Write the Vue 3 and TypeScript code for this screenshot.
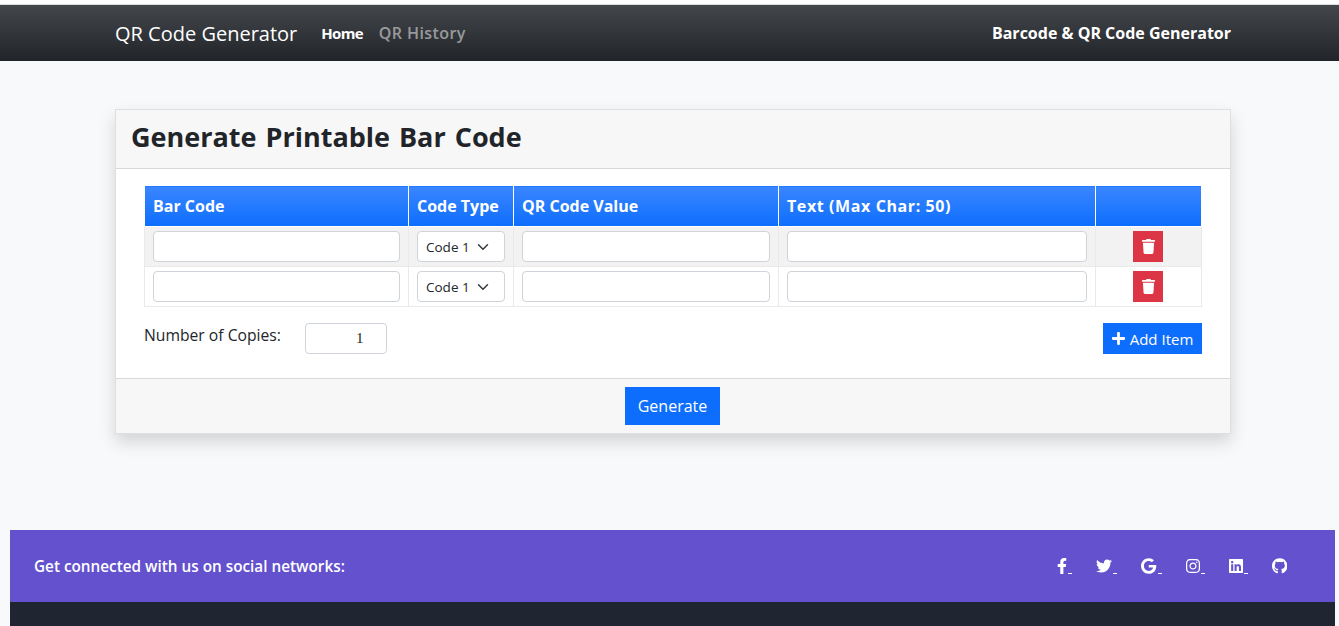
<script setup lang="ts">
import { ref } from 'vue'

interface Social {
  name: string
  viewBox: string
  d: string
}

const rows = ref([{ id: 1 }, { id: 2 }])
const copies = ref(1)

const socials: Social[] = [
  {
    name: 'facebook',
    viewBox: '0 0 320 512',
    d: 'M279.14 288l14.22-92.66h-88.91v-60.13c0-25.35 12.42-50.06 52.24-50.06h40.42V6.26S260.43 0 225.36 0c-73.22 0-121.08 44.38-121.08 124.72v70.62H22.89V288h81.39v224h100.17V288z',
  },
  {
    name: 'twitter',
    viewBox: '0 0 512 512',
    d: 'M459.37 151.716c.325 4.548.325 9.097.325 13.645 0 138.72-105.583 298.558-298.558 298.558-59.452 0-114.68-17.219-161.137-47.106 8.447.974 16.568 1.299 25.34 1.299 49.055 0 94.213-16.568 130.274-44.832-46.132-.975-84.792-31.188-98.112-72.772 6.498.974 12.995 1.624 19.818 1.624 9.421 0 18.843-1.3 27.614-3.573-48.081-9.747-84.143-51.98-84.143-102.985v-1.299c13.969 7.797 30.214 12.67 47.431 13.319-28.264-18.843-46.781-51.005-46.781-87.391 0-19.492 5.197-37.36 14.294-52.954 51.655 63.675 129.3 105.258 216.365 109.807-1.624-7.797-2.599-15.918-2.599-24.04 0-57.828 46.782-104.934 104.934-104.934 30.213 0 57.502 12.67 76.67 33.137 23.715-4.548 46.456-13.32 66.599-25.34-7.798 24.366-24.366 44.833-46.132 57.827 21.117-2.273 41.584-8.122 60.426-16.243-14.292 20.791-32.161 39.308-52.628 54.253z',
  },
  {
    name: 'google',
    viewBox: '0 0 488 512',
    d: 'M488 261.8C488 403.3 391.1 504 248 504 110.8 504 0 393.2 0 256S110.8 8 248 8c66.8 0 123 24.5 166.3 64.9l-67.5 64.9C258.5 52.6 94.3 116.6 94.3 256c0 86.5 69.1 156.6 153.7 156.6 98.2 0 135-70.4 140.8-106.9H248v-85.3h236.1c2.3 12.7 3.9 24.9 3.9 41.4z',
  },
  {
    name: 'instagram',
    viewBox: '0 0 448 512',
    d: 'M224.1 141c-63.6 0-114.9 51.3-114.9 114.9s51.3 114.9 114.9 114.9S339 319.5 339 255.9 287.7 141 224.1 141zm0 189.6c-41.1 0-74.7-33.5-74.7-74.7s33.5-74.7 74.7-74.7 74.7 33.5 74.7 74.7-33.6 74.7-74.7 74.7zm146.4-194.3c0 14.9-12 26.8-26.8 26.8-14.9 0-26.8-12-26.8-26.8s12-26.8 26.8-26.8 26.8 12 26.8 26.8zm76.1 27.2c-1.7-35.9-9.9-67.7-36.2-93.9-26.2-26.2-58-34.4-93.9-36.2-37-2.1-147.9-2.1-184.9 0-35.8 1.7-67.6 9.9-93.9 36.1s-34.4 58-36.2 93.9c-2.1 37-2.1 147.9 0 184.9 1.7 35.9 9.9 67.7 36.2 93.9s58 34.4 93.9 36.2c37 2.1 147.9 2.1 184.9 0 35.9-1.7 67.7-9.9 93.9-36.2 26.2-26.2 34.4-58 36.2-93.9 2.1-37 2.1-147.8 0-184.8zM398.8 388c-7.8 19.6-22.9 34.7-42.6 42.6-29.5 11.7-99.5 9-132.1 9s-102.7 2.6-132.1-9c-19.6-7.8-34.7-22.9-42.6-42.6-11.7-29.5-9-99.5-9-132.1s-2.6-102.7 9-132.1c7.8-19.6 22.9-34.7 42.6-42.6 29.5-11.7 99.5-9 132.1-9s102.7-2.6 132.1 9c19.6 7.8 34.7 22.9 42.6 42.6 11.7 29.5 9 99.5 9 132.1s2.7 102.7-9 132.1z',
  },
  {
    name: 'linkedin',
    viewBox: '0 0 448 512',
    d: 'M416 32H31.9C14.3 32 0 46.5 0 64.3v383.4C0 465.5 14.3 480 31.9 480H416c17.6 0 32-14.5 32-32.3V64.3c0-17.8-14.4-32.3-32-32.3zM135.4 416H69V202.2h66.5V416zm-33.2-243c-21.3 0-38.5-17.3-38.5-38.5S80.9 96 102.2 96c21.2 0 38.5 17.3 38.5 38.5 0 21.3-17.2 38.5-38.5 38.5zm282.1 243h-66.4V312c0-24.8-.5-56.7-34.5-56.7-34.6 0-39.9 27-39.9 54.9V416h-66.4V202.2h63.7v29.2h.9c8.9-16.8 30.6-34.5 62.9-34.5 67.2 0 79.7 44.3 79.7 101.9V416z',
  },
  {
    name: 'github',
    viewBox: '0 0 496 512',
    d: 'M165.9 397.4c0 2-2.3 3.6-5.2 3.6-3.3 0-5.6-1.6-5.6-3.6 0-2 2.3-3.6 5.2-3.6 3-.3 5.6 1.3 5.6 3.6zm-31.1-4.5c-.7 2 1.3 4.3 4.3 4.9 2.6 1 5.6 0 6.2-2s-1.3-4.3-4.3-5.2c-2.6-.7-5.5.3-6.2 2.3zm44.2-1.7c-2.9.7-4.9 2.6-4.6 4.9.3 2 2.9 3.3 5.9 2.6 2.9-.7 4.9-2.6 4.6-4.6-.3-1.9-3-3.2-5.9-2.9zM244.8 8C106.1 8 0 113.3 0 252c0 110.9 69.8 205.8 169.5 239.2 12.8 2.3 17.3-5.6 17.3-12.1 0-6.2-.3-40.4-.3-61.4 0 0-70 15-84.7-29.8 0 0-11.4-29.1-27.8-36.6 0 0-22.9-15.7 1.6-15.4 0 0 24.9 2 38.6 25.8 21.9 38.6 58.6 27.5 72.9 20.9 2.3-16 8.8-27.1 16-33.7-55.9-6.2-112.3-14.3-112.3-110.5 0-27.5 7.6-41.3 23.6-58.9-2.6-6.5-11.1-33.3 2.6-67.9 20.9-6.5 69 27 69 27 20-5.6 41.5-8.5 62.8-8.5s42.8 2.9 62.8 8.5c0 0 48.1-33.6 69-27 13.7 34.7 5.2 61.4 2.6 67.9 16 17.7 25.8 31.5 25.8 58.9 0 96.5-58.9 104.2-114.8 110.5 9.2 7.9 17 22.9 17 46.4 0 33.7-.3 75.4-.3 83.6 0 6.5 4.6 14.4 17.3 12.1C428.2 457.8 496 362.9 496 252 496 113.3 383.5 8 244.8 8z',
  },
]
</script>

<template>
  <div class="page">
    <nav class="navbar">
      <a class="brand">QR Code Generator</a>
      <a class="nav-link active">Home</a>
      <a class="nav-link history">QR History</a>
      <span class="nav-title">Barcode &amp; QR Code Generator</span>
    </nav>

    <main class="card">
      <header class="card-header">
        <h2>Generate Printable Bar Code</h2>
      </header>

      <section class="card-body">
        <table class="items">
          <colgroup>
            <col style="width: 264px" />
            <col style="width: 105px" />
            <col style="width: 265px" />
            <col style="width: 317px" />
            <col style="width: 106px" />
          </colgroup>
          <thead>
            <tr>
              <th>Bar Code</th>
              <th>Code Type</th>
              <th>QR Code Value</th>
              <th class="wide">Text (Max Char: 50)</th>
              <th></th>
            </tr>
          </thead>
          <tbody>
            <tr v-for="row in rows" :key="row.id">
              <td><input class="field" type="text" /></td>
              <td>
                <select class="field select">
                  <option>Code 128</option>
                  <option>QR Code</option>
                </select>
              </td>
              <td><input class="field" type="text" /></td>
              <td><input class="field" type="text" /></td>
              <td class="action">
                <button class="btn-delete" type="button" aria-label="Delete">
                  <svg viewBox="0 0 448 512" width="13" height="15">
                    <path fill="#fff" d="M432 32H312l-9.4-18.7A24 24 0 0 0 281.1 0H166.8a23.72 23.72 0 0 0-21.4 13.3L136 32H16A16 16 0 0 0 0 48v32a16 16 0 0 0 16 16h416a16 16 0 0 0 16-16V48a16 16 0 0 0-16-16zM53.2 467a48 48 0 0 0 47.9 45h245.8a48 48 0 0 0 47.9-45L416 128H32z" />
                  </svg>
                </button>
              </td>
            </tr>
          </tbody>
        </table>

        <div class="copies-row">
          <label class="copies-label">Number of Copies:</label>
          <input v-model="copies" class="field copies" type="number" />
          <button class="btn-add" type="button">
            <svg viewBox="0 0 448 512" width="13" height="15">
              <path fill="#fff" d="M416 208H272V64c0-17.67-14.33-32-32-32h-32c-17.67 0-32 14.33-32 32v144H32c-17.67 0-32 14.33-32 32v32c0 17.67 14.33 32 32 32h144v144c0 17.67 14.33 32 32 32h32c17.67 0 32-14.33 32-32V304h144c17.67 0 32-14.33 32-32v-32c0-17.67-14.33-32-32-32z" />
            </svg>
            Add Item
          </button>
        </div>
      </section>

      <footer class="card-footer">
        <button class="btn-generate" type="button">Generate</button>
      </footer>
    </main>

    <footer class="site-footer">
      <div class="social-bar">
        <span class="social-text">Get connected with us on social networks:</span>
        <div class="social-icons">
          <a v-for="s in socials" :key="s.name" class="social" :aria-label="s.name">
            <svg :viewBox="s.viewBox" height="16">
              <path fill="#fff" :d="s.d" />
            </svg>
            <i class="dash"></i>
          </a>
        </div>
      </div>
      <div class="footer-dark"></div>
    </footer>
  </div>
</template>

<style scoped>
.page {
  height: 626px;
  overflow: hidden;
  padding-top: 0.02px;
  font-family: "Comic Sans MS", "Open Sans", sans-serif;
  color: #212529;
  background: #f8f9fa;
  box-shadow: inset 0 5px 0 #fff;
}

.navbar {
  display: flex;
  align-items: center;
  height: 56px;
  margin-top: 5px;
  padding: 0 108px 0 115px;
  box-shadow: 0 -1px 0 #dcdcdc;
  background: linear-gradient(#43464a, #212529);
}

.brand {
  margin-right: 24px;
  font-size: 20px;
  color: #fff;
}

.nav-link {
  margin-right: 16px;
  font-size: 16px;
  color: rgba(255, 255, 255, 0.5);
}

.nav-link.active {
  font-size: 15px;
  font-weight: 700;
  letter-spacing: -0.7px;
  color: #fff;
}

.nav-link.history {
  font-weight: 600;
  letter-spacing: 0.4px;
}

.nav-title {
  margin-left: auto;
  font-size: 16px;
  font-weight: 700;
  color: #fff;
}

.card {
  width: 1116px;
  margin: 48px 0 0 115px;
  box-sizing: border-box;
  border: 1px solid rgba(0, 0, 0, 0.125);
  background: #fff;
  box-shadow: 0 8px 16px rgba(0, 0, 0, 0.15);
}

.card-header {
  height: 58px;
  box-sizing: content-box;
  display: flex;
  align-items: center;
  padding: 0 15px;
  border-bottom: 1px solid rgba(0, 0, 0, 0.125);
  background: #f7f7f7;
}

.card-header h2 {
  margin: 0 0 6px;
  font-size: 27px;
  font-weight: 700;
  word-spacing: 2px;
  color: #212529;
}

.card-body {
  height: 209px;
  box-sizing: border-box;
  padding: 16px 28px 0;
}

.items {
  width: 1057px;
  table-layout: fixed;
  border-collapse: collapse;
  font-size: 16px;
}

.items th {
  height: 41px;
  padding: 0 8px;
  box-sizing: border-box;
  text-align: left;
  font-weight: 700;
  color: #fff;
  border: 1px solid #fff;
  background: linear-gradient(#3a86ff, #0d6efd);
}

.items th.wide {
  letter-spacing: 0.6px;
}

.items td {
  height: 40px;
  padding: 0 8px;
  box-sizing: border-box;
  border: 1px solid #eaeaea;
}

.items tbody tr:nth-child(odd) td {
  background: #f2f2f2;
}

.items td.action {
  padding: 0 9px 0 8px;
  text-align: center;
}

.field {
  display: block;
  width: 100%;
  height: 31px;
  box-sizing: border-box;
  padding: 4px 8px;
  border: 1px solid #ced4da;
  border-radius: 4px;
  background: #fff;
  font: 13.5px "Comic Sans MS", "Open Sans", sans-serif;
  color: #212529;
}

.select {
  appearance: none;
  padding-right: 36px;
  background-image: url("data:image/svg+xml,%3csvg xmlns='http://www.w3.org/2000/svg' viewBox='0 0 16 16'%3e%3cpath fill='none' stroke='%23343a40' stroke-linecap='round' stroke-linejoin='round' stroke-width='2' d='M2 5l6 6 6-6'/%3e%3c/svg%3e");
  background-repeat: no-repeat;
  background-position: right 14px center;
  background-size: 14px 12px;
}

.btn-delete {
  display: inline-flex;
  align-items: center;
  justify-content: center;
  width: 30px;
  height: 31px;
  padding: 0;
  border: 0;
  vertical-align: middle;
  background: #dc3545;
}

.copies-row {
  display: flex;
  align-items: flex-start;
  margin-top: 16px;
}

.copies-label {
  width: 161px;
  line-height: 24px;
  font-size: 15.7px;
}

.copies {
  width: 82px;
  padding-left: 50px;
  font-family: "Liberation Serif", serif;
  font-size: 15px;
}

.copies::-webkit-inner-spin-button {
  display: none;
}

.btn-add {
  display: flex;
  align-items: center;
  justify-content: center;
  gap: 5px;
  width: 99px;
  height: 31px;
  margin-left: auto;
  padding: 0;
  border: 0;
  background: #0d6efd;
  color: #fff;
  font: 15px "Comic Sans MS", "Open Sans", sans-serif;
}

.card-footer {
  display: flex;
  justify-content: center;
  height: 55px;
  box-sizing: border-box;
  padding: 8px 1px 0 0;
  border-top: 1px solid rgba(0, 0, 0, 0.125);
  background: #f7f7f7;
}

.btn-generate {
  width: 95px;
  height: 38px;
  padding: 0;
  border: 0;
  background: #0d6efd;
  color: #fff;
  font: 16px "Comic Sans MS", "Open Sans", sans-serif;
}

.site-footer {
  margin: 96px 4px 0 10px;
}

.social-bar {
  display: flex;
  align-items: center;
  justify-content: space-between;
  height: 72px;
  padding: 0 48px 0 24px;
  background: #6351ce;
  color: #fff;
}

.social-text {
  font-size: 15.3px;
  font-weight: 600;
}

.social-icons {
  display: flex;
  align-items: center;
  gap: 24px;
}

.social {
  display: flex;
  align-items: flex-end;
}

.social svg {
  display: block;
}

.dash {
  width: 4px;
  height: 1px;
  margin-left: 1px;
  background: #fff;
}

.social:last-child .dash {
  display: none;
}

.footer-dark {
  height: 24px;
  background: #1f2631;
}
</style>

<style>
html,
body {
  margin: 0;
  background: #f8f9fa;
}
</style>
